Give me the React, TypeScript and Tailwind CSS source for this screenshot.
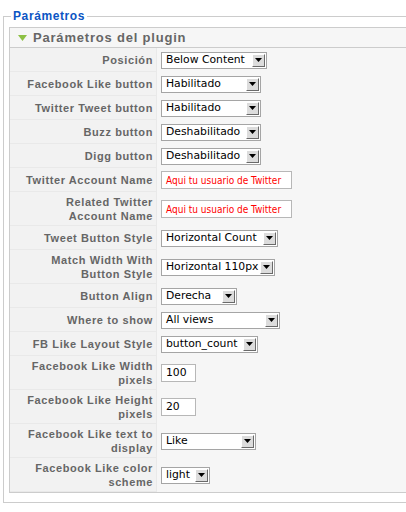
import React from "react";

type Row =
  | { label: string[]; kind: "select"; value: string; width: number }
  | { label: string[]; kind: "text"; value: string; width: number; red?: boolean };

const rows: Row[] = [
  { label: ["Posición"], kind: "select", value: "Below Content", width: 106 },
  { label: ["Facebook Like button"], kind: "select", value: "Habilitado", width: 100 },
  { label: ["Twitter Tweet button"], kind: "select", value: "Habilitado", width: 100 },
  { label: ["Buzz button"], kind: "select", value: "Deshabilitado", width: 100 },
  { label: ["Digg button"], kind: "select", value: "Deshabilitado", width: 100 },
  { label: ["Twitter Account Name"], kind: "text", value: "Aqui tu usuario de Twitter", width: 131, red: true },
  { label: ["Related Twitter", "Account Name"], kind: "text", value: "Aqui tu usuario de Twitter", width: 131, red: true },
  { label: ["Tweet Button Style"], kind: "select", value: "Horizontal Count", width: 117 },
  { label: ["Match Width With", "Button Style"], kind: "select", value: "Horizontal 110px", width: 114 },
  { label: ["Button Align"], kind: "select", value: "Derecha", width: 76 },
  { label: ["Where to show"], kind: "select", value: "All views", width: 119 },
  { label: ["FB Like Layout Style"], kind: "select", value: "button_count", width: 97 },
  { label: ["Facebook Like Width", "pixels"], kind: "text", value: "100", width: 35 },
  { label: ["Facebook Like Height", "pixels"], kind: "text", value: "20", width: 35 },
  { label: ["Facebook Like text to", "display"], kind: "select", value: "Like", width: 95 },
  { label: ["Facebook Like color", "scheme"], kind: "select", value: "light", width: 49 },
];

function FakeSelect({ value, width }: { value: string; width: number }) {
  return (
    <div
      className="flex h-[17px] items-center border border-[#a5a5a5] bg-white"
      style={{ width }}
    >
      <span className="flex-1 overflow-hidden whitespace-nowrap pl-[4px] text-[10.8px] leading-[14px] text-black">{value}</span>
      <span className="mr-px flex h-[13px] w-[13px] shrink-0 items-center justify-center border-b border-r border-b-[#6a6a6a] border-r-[#6a6a6a] border-t border-l border-t-white border-l-white bg-[#dcdcdc]">
        <svg width="7" height="4" viewBox="0 0 7 4">
          <path d="M0 0h7L3.5 4z" fill="#000" />
        </svg>
      </span>
    </div>
  );
}

function TextBox({ value, width, red }: { value: string; width: number; red?: boolean }) {
  return (
    <div
      className={`flex h-[18px] items-center overflow-hidden whitespace-nowrap border border-[#b7b7b7] bg-white pl-[4px] ${
        red
          ? "font-['DejaVu_Sans_Condensed','DejaVu_Sans',sans-serif] text-[10px] text-[#ff0000]"
          : "text-[10.8px] text-black"
      }`}
      style={{ width }}
    >
      {value}
    </div>
  );
}

export default function App() {
  return (
    <div className="h-[512px] w-[406px] overflow-hidden bg-white font-['DejaVu_Sans',sans-serif]">
      <fieldset className="ml-[3px] mt-[9px] w-[430px] border border-[#cccccc] pb-[9px] pl-[5px] pr-0 pt-[4px]">
        <legend className="ml-[2px] px-[2px] font-['Liberation_Sans',Arial,sans-serif] text-[12px] font-bold leading-[14px] tracking-[0.6px] text-[#0b55c4]">
          Parámetros
        </legend>
        <div className="border border-[#cccccc] bg-[#f6f6f6]">
          <div className="flex h-[20px] items-center gap-[6px] border-b border-[#cccccc] pl-[8px]">
            <svg width="9" height="6" viewBox="0 0 9 6">
              <path d="M0 0h9L4.5 6z" fill="#8dc044" />
            </svg>
            <span className="font-['Liberation_Sans',Arial,sans-serif] text-[13px] font-bold tracking-[0.8px] text-[#666666]">
              Parámetros del plugin
            </span>
          </div>
          <div className="flex flex-col">
            {rows.map((r, i) => (
              <div key={i} className="flex">
                <div
                  className={`flex w-[147px] shrink-0 flex-col items-end justify-center border-b border-r border-[#e9e9e9] bg-[#f2f2f2] pr-[3px] text-right font-['Liberation_Sans',Arial,sans-serif] text-[11px] font-bold leading-[14px] tracking-[0.6px] text-[#666666] ${
                    r.label.length > 1 ? "h-[34px]" : "h-[24px]"
                  }`}
                >
                  {r.label.map((l) => (
                    <span key={l} className="whitespace-nowrap">{l}</span>
                  ))}
                </div>
                <div className="flex items-center pl-[4px]">
                  {r.kind === "select" ? (
                    <FakeSelect value={r.value} width={r.width} />
                  ) : (
                    <TextBox value={r.value} width={r.width} red={r.red} />
                  )}
                </div>
              </div>
            ))}
          </div>
        </div>
      </fieldset>
    </div>
  );
}
